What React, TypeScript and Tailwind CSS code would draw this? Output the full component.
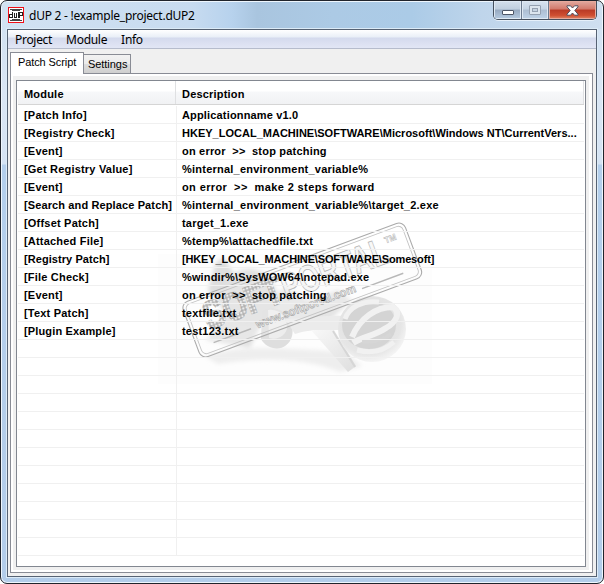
type Row = {
  module: string;
  description: string;
  moduleClass?: string;
  descriptionClass?: string;
};

const rows: Row[] = [
  { module: "[Patch Info]", description: "Applicationname v1.0", descriptionClass: "tracking-[0.16px]" },
  { module: "[Registry Check]", description: "HKEY_LOCAL_MACHINE\\SOFTWARE\\Microsoft\\Windows NT\\CurrentVers...", descriptionClass: "tracking-[0.01px]" },
  { module: "[Event]", description: "on error  >>  stop patching" },
  { module: "[Get Registry Value]", description: "%internal_environment_variable%", descriptionClass: "tracking-[0.23px]" },
  { module: "[Event]", description: "on error  >>  make 2 steps forward", descriptionClass: "tracking-[0.38px]" },
  { module: "[Search and Replace Patch]", description: "%internal_environment_variable%\\target_2.exe", moduleClass: "tracking-[0.12px]", descriptionClass: "tracking-[0.24px]" },
  { module: "[Offset Patch]", description: "target_1.exe" },
  { module: "[Attached File]", description: "%temp%\\attachedfile.txt" },
  { module: "[Registry Patch]", description: "[HKEY_LOCAL_MACHINE\\SOFTWARE\\Somesoft]", moduleClass: "tracking-[0.07px]", descriptionClass: "tracking-[-0.15px]" },
  { module: "[File Check]", description: "%windir%\\SysWOW64\\notepad.exe", descriptionClass: "tracking-[0.13px]" },
  { module: "[Event]", description: "on error  >>  stop patching" },
  { module: "[Text Patch]", description: "textfile.txt" },
  { module: "[Plugin Example]", description: "test123.txt", moduleClass: "tracking-[0.14px]" },
];

const emptyRows: Row[] = Array.from({ length: 12 }, () => ({ module: "", description: "" }));

function AppIcon() {
  return (
    <svg className="shrink-0" width="16" height="16" viewBox="0 0 16 16" shapeRendering="crispEdges">
      <rect width="16" height="16" fill="#f01018" />
      <rect x="1" y="1" width="14" height="14" fill="#fff" />
      <path d="M2 2h12v1H2zM4 3h8v1H4zM2 13h12v1H2zM4 12h8v1H4z" fill="#444" />
      <path d="M4 5h1v6H1V7h3zM2 8v2h2V8zM6 6h1v4h1V6h1v5H6zM10 5h5v4h-3v2h-2zM12 6v2h2V6z" fill="#222" fillRule="evenodd" />
    </svg>
  );
}

function CaptionButtons() {
  return (
    <div className="absolute right-[6px] top-0 flex h-[19px] w-[104px] overflow-hidden rounded-b-[5px] border border-t-0 border-[#46505e] shadow-[0_1px_0_#e6f0fa]">
      <div className="flex w-[28px] items-center justify-center border-r border-[#6c7b8f] bg-[linear-gradient(#d3dfec_0%,#bfcede_45%,#97a9c0_50%,#b6cbe1_100%)] pt-[5px] shadow-[inset_0_0_0_1px_#dfe9f3]">
        <div className="h-[5px] w-[12px] rounded-[1px] border border-[#4d5566] bg-white"></div>
      </div>
      <div className="flex w-[27px] items-center justify-center border-r border-[#6c7b8f] bg-[linear-gradient(#d8e3ef_0%,#c6d5e5_45%,#adbed2_50%,#bfd3e8_100%)] shadow-[inset_0_0_0_1px_#dfe9f3]">
        <div className="flex h-[10px] w-[12px] items-center justify-center rounded-[1px] border border-[#95a1b1] bg-[#dce5ee]">
          <div className="h-[4px] w-[6px] border border-[#95a1b1] bg-[#c6d3e1]"></div>
        </div>
      </div>
      <div className="flex flex-1 items-center justify-center bg-[linear-gradient(#e2aaa0_0%,#d2796b_45%,#b93a25_50%,#cf4f32_80%,#e08a68_100%)] shadow-[inset_0_0_0_1px_#e6aa9d]">
        <svg width="13" height="11" viewBox="0 0 13 11">
          <path d="M1 .8h3.5l2 2.2 2-2.2H12v1L8.8 5.5 12 9.2v1H8.5l-2-2.2-2 2.2H1v-1l3.2-3.7L1 1.8z" fill="#fff" stroke="#4e4d5c" strokeWidth="1" />
        </svg>
      </div>
    </div>
  );
}

function Figure() {
  return (
    <svg className="pointer-events-none absolute left-[158px] top-[230px]" width="280" height="165" viewBox="158 230 280 165">
      <defs>
        <linearGradient id="limb" x1="0" y1="0" x2="1" y2="1">
          <stop offset="0" stopColor="#f8f8f8" />
          <stop offset="1" stopColor="#dedede" />
        </linearGradient>
        <radialGradient id="ball" cx="0.45" cy="0.4" r="0.6">
          <stop offset="0" stopColor="#dadada" />
          <stop offset="0.8" stopColor="#e6e6e6" />
          <stop offset="1" stopColor="#f4f4f4" />
        </radialGradient>
        <filter id="soft" x="-20%" y="-20%" width="140%" height="140%">
          <feGaussianBlur stdDeviation="2" />
        </filter>
      </defs>
      <rect x="158" y="254" width="274" height="130" fill="#fdfdfd" />
      <path d="M205 356C240 344 280 348 345 352L362 366 340 372C300 356 250 358 218 364z" fill="#eeeeee" filter="url(#soft)" />
      <path d="M216 262l8-4 18 28 28 20-14 22-28-12-20-26z" fill="#dedede" filter="url(#soft)" />
      <path d="M206 340l28-34 34 4-18 38z" fill="#e2e2e2" filter="url(#soft)" />
      <path d="M262 300l24-12 22 12 30-10 14 10-22 20-52 4z" fill="#e4e4e4" filter="url(#soft)" />
      <circle cx="249" cy="297" r="28" fill="#e0e0e0" filter="url(#soft)" />
      <path d="M262 312c16-12 34 8 30 24-4 16-24 16-31 3z" fill="#dedede" />
      <path d="M268 310c12-2 19 8 19 17 0 8-10 14-18 11z" fill="#ededed" />
      <path d="M285 319c16 0 34-4 62-3l-2 14c-20 0-38-1-50 4z" fill="#ebebeb" />
      <path d="M311 330h23l22 36-8 6z" fill="url(#limb)" />
      <path d="M333 331l22 36" stroke="#d6d6d6" strokeWidth="2" fill="none" />
      <ellipse cx="372" cy="329" rx="34" ry="33" fill="url(#ball)" />
      <ellipse cx="369" cy="325" rx="27" ry="24" fill="#d4d4d4" />
      <path d="M352 337C360 318 376 307 393 307c9 6 2 16-7 21-12 8-24 9-33 15" stroke="#f1f1f1" strokeWidth="6" fill="none" />
      <path d="M345 319c4-12 18-19 34-17M357 350c14 4 27 1 37-8" stroke="#f1f1f1" strokeWidth="5" fill="none" />
      <path d="M362 341c12 2 21-1 29-7" stroke="#d6d6d6" strokeWidth="4" fill="none" />
    </svg>
  );
}

function Stamp() {
  return (
    <svg className="pointer-events-none absolute left-[158px] top-[210px]" width="280" height="165" viewBox="158 210 280 165">
      <defs>
        <pattern id="mesh" width="3.5" height="3.5" patternUnits="userSpaceOnUse">
          <rect width="3.5" height="3.5" fill="#a6a6a6" />
          <rect x="0.6" y="0.6" width="2.3" height="2.3" fill="#ececec" />
        </pattern>
      </defs>
      <g transform="translate(180 304) rotate(-20.4)" fontFamily="Liberation Sans, Arial, sans-serif">
        <rect x="1" y="0" width="237" height="59" rx="7" fill="#fff" fillOpacity="0.18" stroke="#ababab" strokeWidth="1.1" />
        <rect x="4" y="3" width="231" height="53" rx="5" fill="none" stroke="#c4c4c4" strokeWidth="0.9" />
        <text x="18" y="34" fontSize="38" fontWeight="700" textLength="82" lengthAdjust="spacingAndGlyphs" fill="url(#mesh)" fillOpacity="0.85" stroke="url(#mesh)" strokeWidth="2">SOFT</text>
        <text x="101" y="34" fontSize="38" fontWeight="700" textLength="112" lengthAdjust="spacingAndGlyphs" fill="#f0f0f0" fillOpacity="0.45" stroke="#b4b4b4" strokeWidth="0.8">PORTAL</text>
        <text x="214" y="15" fontSize="9" fontWeight="700" textLength="12" lengthAdjust="spacingAndGlyphs" fill="#fff" stroke="#b4b4b4" strokeWidth="0.5">TM</text>
        <text x="64" y="50" fontSize="12" fontWeight="700" textLength="106" lengthAdjust="spacingAndGlyphs" fill="#efefef" stroke="#a6a6a6" strokeWidth="0.6">www.softportal.com</text>
        <path d="M18 48h40M176 49h44" stroke="#b8b8b8" strokeWidth="1.4" />
      </g>
    </svg>
  );
}

export default function App() {
  return (
    <div className="h-[584px] w-[604px] bg-white">
      <div className="relative flex h-full w-full flex-col rounded-[7px] border border-[#20242c] bg-[linear-gradient(180deg,#cfe0f1_0px,#dae6f4_90px,#d5e3f3_163px,#b4cfec_164px,#b3cdea_100%)] px-[6px] pb-[6px] font-['Liberation_Sans',Arial,sans-serif] text-black shadow-[inset_0_0_0_1px_#eef6fd]">
        <div className="absolute inset-x-[1px] top-[1px] h-[27px] rounded-t-[5px] bg-[linear-gradient(90deg,#d2e2f2_0px,#c7dbf0_190px,#b7d2ed_230px,#a9c5df_255px,#accae5_330px,#abcbe7_410px,#bfd5eb_480px,#cfdff0_100%)]"></div>
        <header className="relative flex h-[28px] items-start gap-[5px] pl-[1px] pt-[6px]">
          <AppIcon />
          <h1 className="whitespace-nowrap font-['Noto_Sans',sans-serif] text-[12px] leading-[17px] tracking-[-0.25px]">dUP 2 - !example_project.dUP2</h1>
        </header>
        <CaptionButtons />

        <div className="relative flex min-w-0 flex-1 flex-col border border-[#566273] bg-[#f0f0f0] shadow-[0_0_0_1px_#dcebf7]">
          <nav className="flex h-[19px] items-center gap-[14px] border-b border-[#b6bccc] bg-[linear-gradient(#ffffff_0px,#e9eff7_7px,#d4daed_8px,#e2e6f5_18px)] pl-[7px] pt-[2px] font-['Noto_Sans',sans-serif] text-[12px] leading-[18px] tracking-[-0.3px]">
            <span>Project</span>
            <span>Module</span>
            <span>Info</span>
          </nav>

          <main className="flex min-w-0 flex-1 flex-col pb-[3px] pl-[2px] pr-[3px] pt-[3px]">
            <div className="flex h-[21px] items-end text-[11px]">
              <div className="relative z-10 -mb-px h-[22px] w-[74px] whitespace-nowrap border border-b-0 border-[#898c95] bg-white pl-[7px] pt-px leading-[16px] tracking-[-0.1px]">Patch Script</div>
              <div className="h-[19px] w-[47px] border border-b-0 border-l-0 border-[#898c95] bg-[linear-gradient(#f2f2f2_0%,#ebebeb_48%,#dddddd_52%,#cfcfcf_100%)] pl-[4px] pt-px leading-[16px] tracking-[-0.05px]">Settings</div>
            </div>

            <div className="flex min-w-0 flex-1 border border-[#898c95] bg-white pb-[2px] pl-[2px] pr-[3px] pt-[2px]">
              <div className="flex min-w-0 flex-1 bg-[#f0f0f0] pb-[3px] pl-[3px] pr-[3px] pt-[4px]">
                <section className="relative flex min-w-0 flex-1 flex-col overflow-hidden border border-[#828790] bg-white px-px text-[11px] font-bold tracking-[0.2px]">
                  <div className="flex h-[24px] shrink-0 border-b border-[#d5d5d5] bg-[linear-gradient(#ffffff_0px,#ffffff_10px,#f7f8fa_11px,#f1f2f4_23px)] leading-[26px]">
                    <div className="w-[158px] border-r border-[#dfe0e2] pl-[6px]">Module</div>
                    <div className="flex-1 border-r border-[#dfe0e2] pl-[6px]">Description</div>
                  </div>
                  <div className="mb-px flex-1 overflow-hidden pt-px">
                    {[...rows, ...emptyRows].map((row, i) => (
                      <div key={i} className="relative z-10 flex h-[18px] whitespace-pre border-b border-[#f0f0f0] leading-[18px]">
                        <div className={`w-[159px] shrink-0 border-r border-[#f0f0f0] pl-[6px] ${row.moduleClass ?? ""}`}>{row.module}</div>
                        <div className={`flex-1 pl-[5px] ${row.descriptionClass ?? ""}`}>{row.description}</div>
                      </div>
                    ))}
                  </div>
                  <div className="absolute -left-[17px] -top-[81px]">
                    <Figure />
                  </div>
                </section>
              </div>
            </div>
          </main>
        </div>
        <div className="absolute -left-px -top-px">
          <Stamp />
        </div>
      </div>
    </div>
  );
}
